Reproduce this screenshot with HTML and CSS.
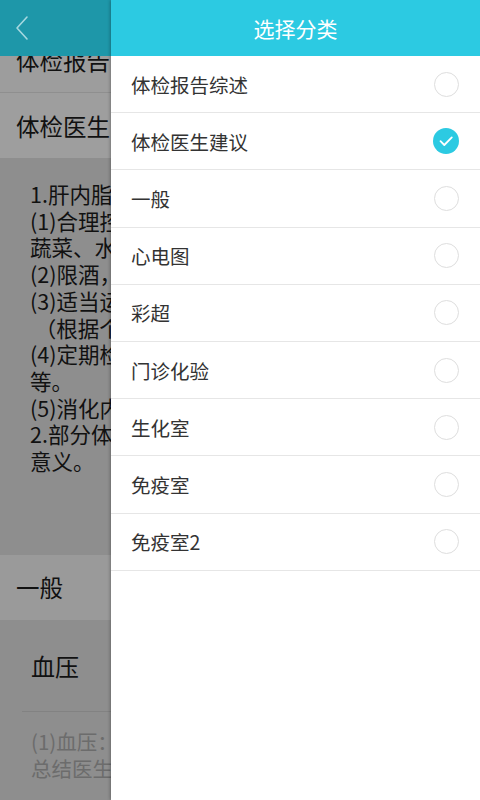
FILE: index.html
```html
<!DOCTYPE html>
<html lang="zh-CN">
<head>
<meta charset="utf-8">
<title>选择分类</title>
<link rel="stylesheet" href="styles.css">
</head>
<body>
<div class="screen">
  <div class="page">
    <header class="page-bar">
      <svg class="back" width="16" height="26" viewBox="0 0 16 26"><path d="M13 2 L3 13 L13 24" fill="none" stroke="currentColor" stroke-width="1.6" stroke-linecap="round" stroke-linejoin="round"/></svg>
    </header>
    <div class="page-body">
      <div class="sec-title">体检报告</div>
      <div class="doc-row">体检医生</div>
      <div class="doc-text">
        <p>1.肝内脂</p>
        <p>(1)合理控</p>
        <p>蔬菜、水</p>
        <p>(2)限酒，</p>
        <p>(3)适当运</p>
        <p>&nbsp;（根据个</p>
        <p>(4)定期检</p>
        <p>等。</p>
        <p>(5)消化内</p>
        <p>2.部分体</p>
        <p>意义。</p>
      </div>
      <div class="sec-title sec-general">一般</div>
      <div class="item">血压</div>
      <div class="item-text">
        <p>(1)血压：</p>
        <p>总结医生</p>
      </div>
    </div>
  </div>

  <aside class="drawer">
    <header class="drawer-bar">选择分类</header>
    <ul class="cat-list">
      <li class="cat"><span>体检报告综述</span><i class="radio"></i></li>
      <li class="cat"><span>体检医生建议</span><i class="radio checked"><svg width="26" height="26" viewBox="0 0 26 26"><path d="M7.5 13.2 L11.3 17 L18.8 9.4" fill="none" stroke="#fff" stroke-width="1.8" stroke-linecap="round" stroke-linejoin="round"/></svg></i></li>
      <li class="cat"><span>一般</span><i class="radio"></i></li>
      <li class="cat"><span>心电图</span><i class="radio"></i></li>
      <li class="cat"><span>彩超</span><i class="radio"></i></li>
      <li class="cat"><span>门诊化验</span><i class="radio"></i></li>
      <li class="cat"><span>生化室</span><i class="radio"></i></li>
      <li class="cat"><span>免疫室</span><i class="radio"></i></li>
      <li class="cat"><span>免疫室2</span><i class="radio"></i></li>
    </ul>
  </aside>
</div>
</body>
</html>
```

FILE: styles.css
```css
* { box-sizing: border-box; }
html, body { margin: 0; padding: 0; }
body {
  width: 480px;
  height: 800px;
  overflow: hidden;
  font-family: "Noto Sans CJK SC", "Noto Sans", sans-serif;
}
p { margin: 0; }
ul { margin: 0; padding: 0; list-style: none; }

.screen {
  position: relative;
  width: 480px;
  height: 800px;
  overflow: hidden;
  background: #8e8e8e;
}

/* underlying (dimmed) page */
.page { width: 480px; height: 800px; overflow: hidden; }
.page-bar {
  position: relative;
  z-index: 2;
  height: 56px;
  background: #1e97a9;
  display: flex;
  align-items: center;
  padding-left: 14px;
  color: #a6d8e0;
}
.back { display: block; }

.page-body { margin-top: -28px; }
.sec-title {
  height: 64px;
  line-height: 64px;
  padding-left: 16px;
  font-size: 23.5px;
  color: #111;
  background: #9d9d9d;
  white-space: nowrap;
}
.doc-row {
  height: 66px;
  line-height: 66px;
  padding-left: 16px;
  font-size: 23.5px;
  color: #111;
  background: #9e9e9e;
  border-top: 1px solid #8f8f8f;
  white-space: nowrap;
}
.doc-text {
  height: 397px;
  padding: 23px 0 0 30px;
  background: #8e8e8e;
  font-size: 21.5px;
  line-height: 26.7px;
  color: #111;
  white-space: nowrap;
}
.sec-general {
  height: 65px;
  line-height: 65px;
  background: #9a9a9a;
}
.item {
  height: 92px;
  line-height: 92px;
  margin-left: 22px;
  padding-left: 9px;
  font-size: 24px;
  color: #111;
  border-bottom: 1px solid #828282;
}
.item-text {
  padding: 16px 0 0 31px;
  font-size: 20.5px;
  line-height: 27px;
  color: #6c6c6c;
  white-space: nowrap;
}

/* drawer */
.drawer {
  position: absolute;
  z-index: 5;
  top: 0;
  left: 111px;
  width: 369px;
  height: 800px;
  background: #fff;
  box-shadow: -1px 0 3px rgba(0, 0, 0, 0.25);
}
.drawer-bar {
  height: 56px;
  line-height: 56px;
  text-align: center;
  background: #2ccae2;
  color: #fff;
  font-size: 21px;
}
.cat {
  height: 57.2px;
  display: flex;
  align-items: center;
  justify-content: space-between;
  padding: 0 21px 0 20px;
  border-bottom: 1px solid #e6e6e6;
  font-size: 19.5px;
  color: #333;
}
.radio {
  width: 25px;
  height: 25px;
  border-radius: 50%;
  border: 1.5px solid #dedede;
  display: flex;
  align-items: center;
  justify-content: center;
}
.radio.checked {
  width: 26px;
  height: 26px;
  border: none;
  background: #2ccae2;
}
.radio svg { display: block; }
```
